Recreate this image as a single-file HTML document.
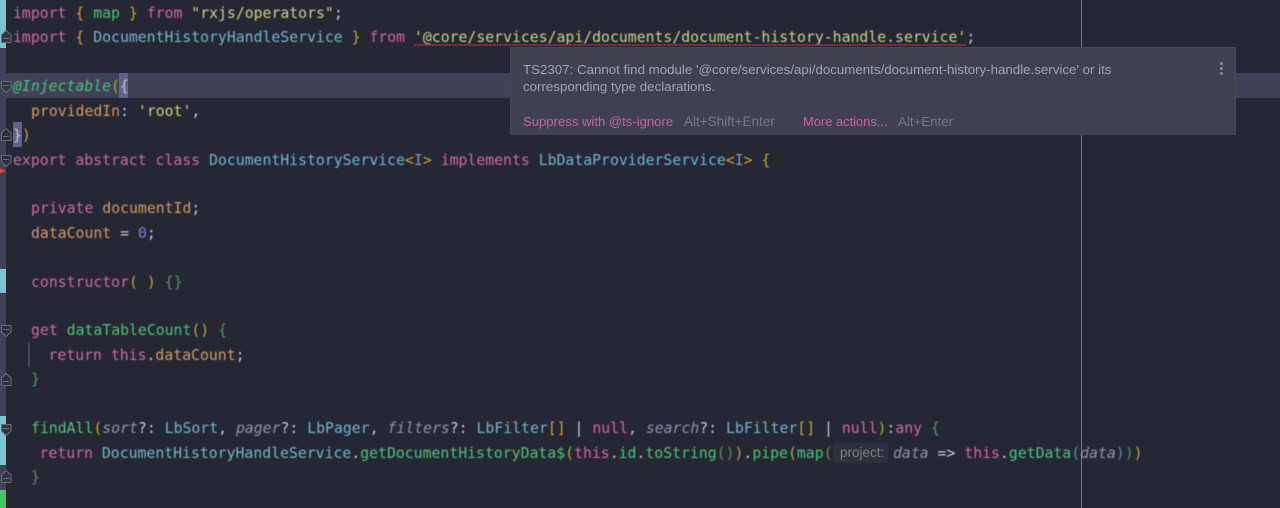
<!DOCTYPE html>
<html><head><meta charset="utf-8"><style>
html,body{margin:0;padding:0;background:#252733}
#r{position:relative;width:1280px;height:508px;overflow:hidden;background:#252733}
.l{position:absolute;white-space:pre;font:500 14.8px/24px "DejaVu Sans Mono","Liberation Mono",monospace;color:#c8c9d2;height:24px;filter:blur(.4px);margin-top:1px}
.k{color:#cf6a9f}.t{color:#74b6cf}.f{color:#4cc47a}.o{color:#d19c66}.s{color:#cfd08c}.b{color:#c9a33f}.g{color:#4f9c5a}.u{color:#4b8fcf}.p{color:#9195a8;font-style:italic}.n{color:#8c7cd2}.w{color:#c8c9d2}
.a{position:absolute}
.tip{position:absolute;white-space:pre;font:13.3px/16px "Liberation Sans",sans-serif;filter:blur(.3px)}
</style></head><body><div id="r">
<div class="a" style="left:0;top:0;width:6px;height:508px;background:#3f4254"></div>
<div class="a" style="left:0;top:0;width:6px;height:48px;background:#7cc4d2"></div>
<div class="a" style="left:0;top:269px;width:6px;height:24px;background:#7cc4d2"></div>
<div class="a" style="left:0;top:416px;width:6px;height:49px;background:#7cc4d2"></div>
<div class="a" style="left:0;top:490px;width:6px;height:18px;background:#4cc46a"></div>
<div class="a" style="left:6px;top:73px;width:1274px;height:25px;background:#3f4256"></div>
<div class="a" style="left:119px;top:73px;width:9px;height:25px;background:#5d6488"></div>
<div class="a" style="left:13px;top:122px;width:9px;height:25px;background:#5d6488"></div>
<div class="a" style="left:1081px;top:0;width:1px;height:508px;background:#6f759c"></div>
<div class="a" style="left:28px;top:343px;width:2px;height:24px;background:#454857"></div>

<svg class="a" style="left:0;top:0" width="14" height="508" fill="none" stroke="#6a6d7e" stroke-width="1">
<path d="M1.500 42.500V35L6 30.500L11 35V42.500Z M3 38.500H9" fill="#33353f"/>
<path d="M1.500 81.500H11V88L6 92.500L1.500 88Z M3 85.500H9" fill="#33353f"/>
<path d="M1.500 140.500V133L6 128.500L11 133V140.500Z M3 136.500H9" fill="#2c2e3a"/>
<path d="M1.500 155.500H11V162L6 166.500L1.500 162Z M3 159.500H9" fill="#2c2e3a"/>
<path d="M1.500 325.500H11V332L6 336.500L1.500 332Z M3 329.500H9" fill="#2c2e3a"/>
<path d="M1.500 385.500V378L6 373.500L11 378V385.500Z M3 381.500H9" fill="#2c2e3a"/>
<path d="M1.500 424.500H11V431L6 435.500L1.500 431Z M3 428.500H9" fill="#33353f"/>
<path d="M1.500 482.500V475L6 470.500L11 475V482.500Z M3 478.500H9" fill="#33353f"/>
<path d="M0 168.500L6 171L0 173.500Z" fill="#e0443a" stroke="none"/>
</svg>

<div class="l" style="left:13px;top:1px"><span class="k">import</span> <span class="b">{</span> <span class="f">map</span> <span class="b">}</span> <span class="k">from</span> <span class="s">"rxjs/operators"</span>;</div>
<div class="l" style="left:13px;top:25px"><span class="k">import</span> <span class="b">{</span> <span class="t">DocumentHistoryHandleService</span> <span class="b">}</span> <span class="k">from</span> <span class="s">'@core/services/api/documents/document-history-handle.service'</span>;</div>
<svg class="a" style="left:414px;top:43px" width="552" height="4"><line x1="0" y1="2" x2="552" y2="2" stroke="#b02c4a" stroke-width="1.600" stroke-dasharray="2 .5"/></svg>
<div class="l" style="left:13px;top:74px"><i class="f">@Injectable</i><span class="b">(</span><span class="w">{</span></div>
<div class="l" style="left:31px;top:99px"><span class="o">providedIn</span>: <span class="s">'root'</span>,</div>
<div class="l" style="left:13px;top:123px"><span class="w">}</span><span class="b">)</span></div>
<div class="l" style="left:13px;top:148px"><span class="k">export abstract class</span> <span class="t">DocumentHistoryService</span><span class="b">&lt;</span><span style="color:#8c8fd0">I</span><span class="b">&gt;</span> <span class="k">implements</span> <span class="t">LbDataProviderService</span><span class="b">&lt;</span><span style="color:#8c8fd0">I</span><span class="b">&gt;</span> <span class="b">{</span></div>
<div class="l" style="left:31px;top:196px"><span class="k">private</span> <span class="o">documentId</span>;</div>
<div class="l" style="left:31px;top:221px"><span class="o">dataCount</span> = <span class="n">0</span>;</div>
<div class="l" style="left:31px;top:270px"><span class="k">constructor</span><span class="b">( )</span> <span class="g">{}</span></div>
<div class="l" style="left:31px;top:318px"><span class="k">get</span> <span class="f">dataTableCount</span><span class="b">()</span> <span class="g">{</span></div>
<div class="l" style="left:48.500px;top:343px"><span class="k">return this</span>.<span class="o">dataCount</span>;</div>
<div class="l" style="left:31px;top:367px"><span class="g">}</span></div>
<div class="l" style="left:31px;top:416px"><span class="f">findAll</span><span class="b">(</span><span class="p">sort</span>?: <span class="t">LbSort</span>, <span class="p">pager</span>?: <span class="t">LbPager</span>, <span class="p">filters</span>?: <span class="t">LbFilter</span><span class="b">[]</span> | <span class="k">null</span>, <span class="p">search</span>?: <span class="t">LbFilter</span><span class="b">[]</span> | <span class="k">null</span><span class="b">)</span>:<span class="k">any</span> <span class="g">{</span></div>
<div class="l" style="left:39.500px;top:441px"><span class="k">return</span> <span class="t">DocumentHistoryHandleService</span>.<span class="f">getDocumentHistoryData$</span><span class="b">(</span><span class="k">this</span>.<span class="f">id</span>.<span class="f">toString</span><span class="g">()</span><span class="b">)</span>.<span class="f">pipe</span><span class="b">(</span><span class="f">map</span><span class="g">(</span></div>
<div class="a" style="left:833px;top:443px;width:55px;height:20px;border-radius:3px;background:#2f313a"></div>
<div class="tip" style="left:840px;top:445px;color:#7c7e86;font-size:13.500px">project:</div>
<div class="l" style="left:893px;top:441px"><span class="p">data</span> =&gt; <span class="k">this</span>.<span class="f">getData</span><span class="u">(</span><span class="p">data</span><span class="u">)</span><span class="g">)</span><span class="b">)</span></div>
<div class="l" style="left:31px;top:465px"><span class="g">}</span></div>

<div class="a" style="left:510px;top:47px;width:726px;height:88px;background:#3f414f;box-shadow:0 0 0 1px #464857 inset"></div>
<div class="tip" style="left:523px;top:62px;color:#a2a4ad">TS2307: Cannot find module '@core/services/api/documents/document-history-handle.service' or its</div>
<div class="tip" style="left:523px;top:79px;color:#a2a4ad">corresponding type declarations.</div>
<div class="tip" style="left:523px;top:114px;color:#c565a5;font-size:13.100px">Suppress with @ts-ignore</div>
<div class="tip" style="left:684px;top:114px;color:#777984;font-size:13.500px">Alt+Shift+Enter</div>
<div class="tip" style="left:803px;top:114px;color:#c565a5;font-size:12.900px">More actions...</div>
<div class="tip" style="left:898px;top:114px;color:#777984">Alt+Enter</div>
<div class="a" style="left:1220px;top:62px;width:3px;height:3px;border-radius:2px;background:#8a8c96;box-shadow:0 5px 0 #8a8c96,0 10px 0 #8a8c96"></div>
</div></body></html>
